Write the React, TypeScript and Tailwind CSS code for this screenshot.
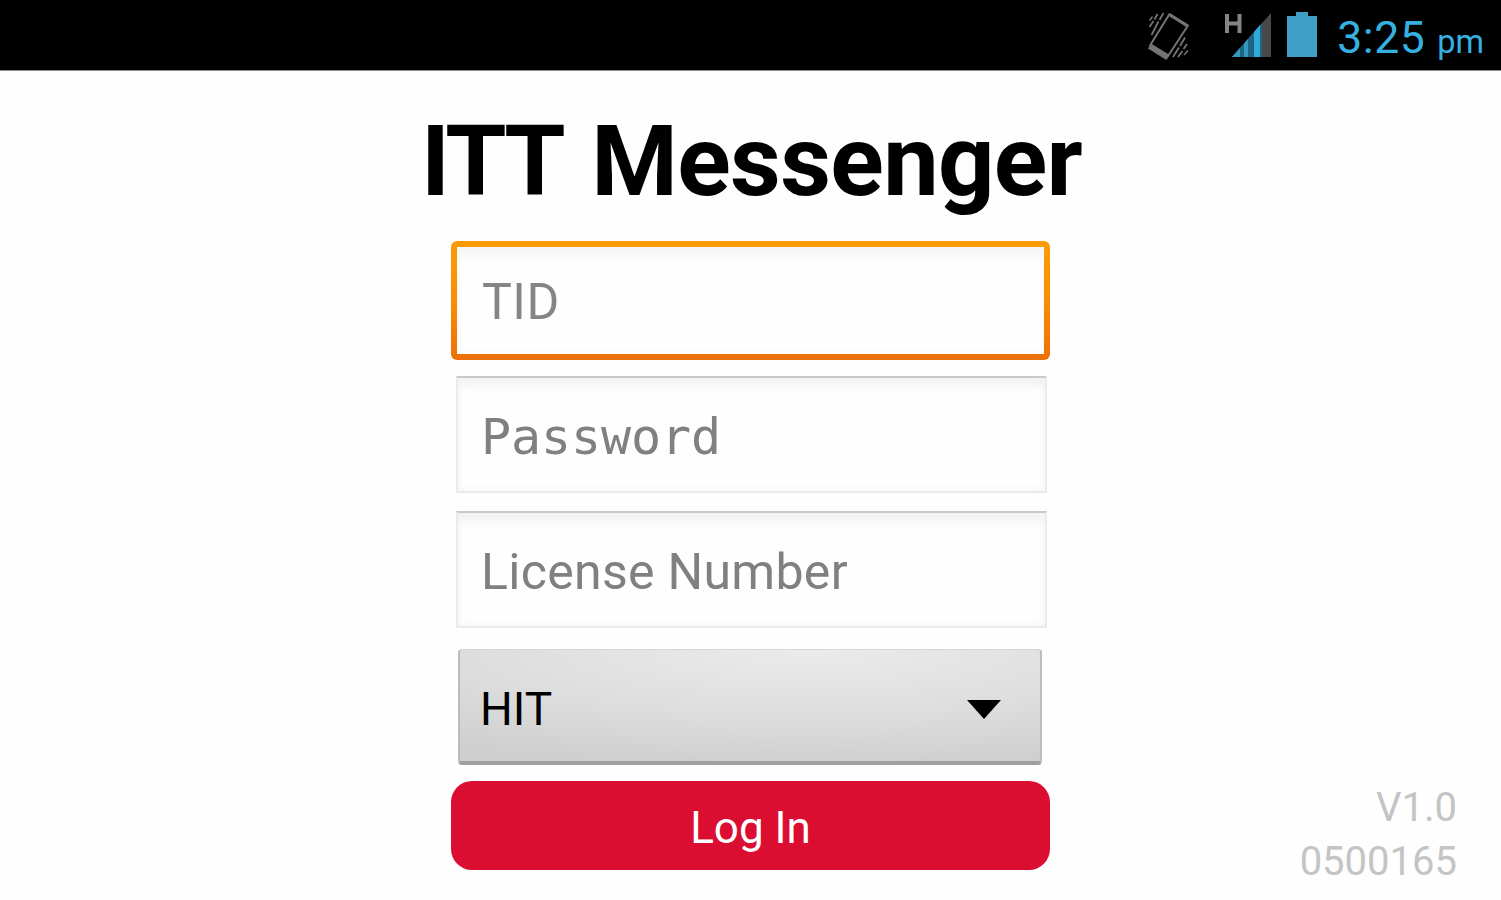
const fields = [
  { name: "Password", font: "font-['DejaVu_Sans_Mono',monospace] text-[50px] tracking-[-0.1px]" },
  { name: "License Number", font: "text-[50px] tracking-[0.3px]" },
];

function VibrateIcon() {
  return (
    <svg width="46" height="52" viewBox="0 0 46 52" fill="none" stroke="#747474">
      <path d="M23.500 4 L42 15.500 L22 46 L4 35.500 Z" strokeWidth="2" strokeLinejoin="round" />
      <path d="M24 5 L41.500 16" strokeWidth="3" />
      <path d="M3.500 36 L22 47.500" strokeWidth="6" />
      <g strokeWidth="1.800">
        <path d="M17.500 3 L13.500 10 M12.500 11.500 L5.500 25" />
        <path d="M11.500 4 L8.500 9.500 M7.500 11 L3.500 17" />
        <path d="M39 27.500 L34 36 M33 37.500 L27 47" />
        <path d="M41 34 L37.500 39 M36.500 41 L32 47" />
        <path d="M6.500 6.500 L3.500 10.500 M42 40.500 L38 45" strokeWidth="1.500" />
      </g>
    </svg>
  );
}

function SignalIcon() {
  return (
    <svg width="48" height="48" viewBox="0 0 48 48">
      <path d="M3 2v19M15.500 2v19M3 11.500h12.500" stroke="#858585" strokeWidth="4" />
      <path d="M47 1v44H8z" fill="#484848" />
      <path d="M38 11v34H8z" fill="#1b6687" />
      <path d="M8 45l8-9v9z" fill="#3398be" />
      <path d="M20 31.500l4-4.500V45h-4z" fill="#3398be" />
      <path d="M30 20l6-7v32h-6z" fill="#34a9d8" />
    </svg>
  );
}

function BatteryIcon() {
  return (
    <svg width="30" height="45" viewBox="0 0 30 45">
      <path d="M9 0h12v4h9v41H0V4h9z" fill="#409fc4" />
    </svg>
  );
}

function StatusBar() {
  return (
    <header className="flex h-[71px] items-start justify-end border-b border-[#8a8a8a] bg-black pr-[17px] text-[#36b0e0]">
      <div className="mt-[10px] mr-[32px]">
        <VibrateIcon />
      </div>
      <div className="mt-[12px] mr-[15px]">
        <SignalIcon />
      </div>
      <div className="mt-[12px] mr-[20px]">
        <BatteryIcon />
      </div>
      <div className="mt-[8px] flex items-baseline leading-[60px] whitespace-nowrap">
        <span className="w-[100px] text-[44.5px] tracking-[0.6px]">3:25</span>
        <span className="text-[32.500px]">pm</span>
      </div>
    </header>
  );
}

export default function App() {
  return (
    <div className="flex h-[900px] w-[1501px] flex-col overflow-hidden bg-[#fefefe] font-['Roboto',sans-serif]">
      <StatusBar />

      <main className="grid flex-1 grid-cols-[451px_599px_451px] grid-rows-[170px_1fr]">
        <h1 className="col-span-3 pt-[41px] pl-[421px] text-[99px] leading-none font-bold tracking-[-0.7px] whitespace-nowrap text-black">
          <span className="mr-[5px] tracking-[-3.2px]">ITT</span> Messenger
        </h1>

        <form className="col-start-2 flex flex-col items-center">
          <div className="h-[119px] w-full rounded-[6px] bg-linear-to-b from-[#fb9b08] via-[#fa8d04] to-[#ec7008] p-[6px]">
            <div className="flex h-full items-center bg-[#fefefe] pt-[3px] pl-[25px] text-[50px] text-[#858585] shadow-[inset_0_12px_10px_-4px_#f5f5f5,inset_0_0_8px_#f6f6f6]">
              <span className="tracking-[0.5px]">TID</span>
            </div>
          </div>

          <div className="mt-[16px] ml-[2px] flex flex-col gap-[18px]">
            {fields.map((field) => (
              <div
                key={field.name}
                className="flex h-[117px] w-[591px] items-center border-2 border-[#ebebeb] border-t-[#c9c9c9] bg-[#fefefe] pt-[6px] pl-[23px] text-[#808080] shadow-[inset_0_12px_10px_-4px_#f2f2f2,inset_0_0_10px_#f4f4f4]"
              >
                <span className={field.font}>{field.name}</span>
              </div>
            ))}
          </div>

          <div className="mt-[21px] mr-[1px] flex h-[116px] w-[584px] items-center justify-between rounded-[4px] border-x-2 border-t border-b-4 border-x-[#bcbcbc] border-t-[#d6d6d6] border-b-[#a0a0a0] bg-[radial-gradient(ellipse_120%_120%_at_60%_0%,#ebebeb,#dddddd_50%,#cecece_90%)] pt-[8px] pr-[39px] pl-[20px] text-[46px] text-black">
            <span>HIT</span>
            <svg width="34" height="19" viewBox="0 0 34 19">
              <path d="M0 0h34L17 19z" />
            </svg>
          </div>

          <button
            type="button"
            className="mt-[16px] h-[89px] w-full rounded-[21px] bg-[#db0e32] pt-[4px] text-[44px] text-white"
          >
            Log In
          </button>
        </form>

        <div className="self-end pr-[44px] pb-[11px] text-right text-[40px] leading-[54px] text-[#c4c4c4]">
          <p>V1.0</p>
          <p>0500165</p>
        </div>
      </main>
    </div>
  );
}
